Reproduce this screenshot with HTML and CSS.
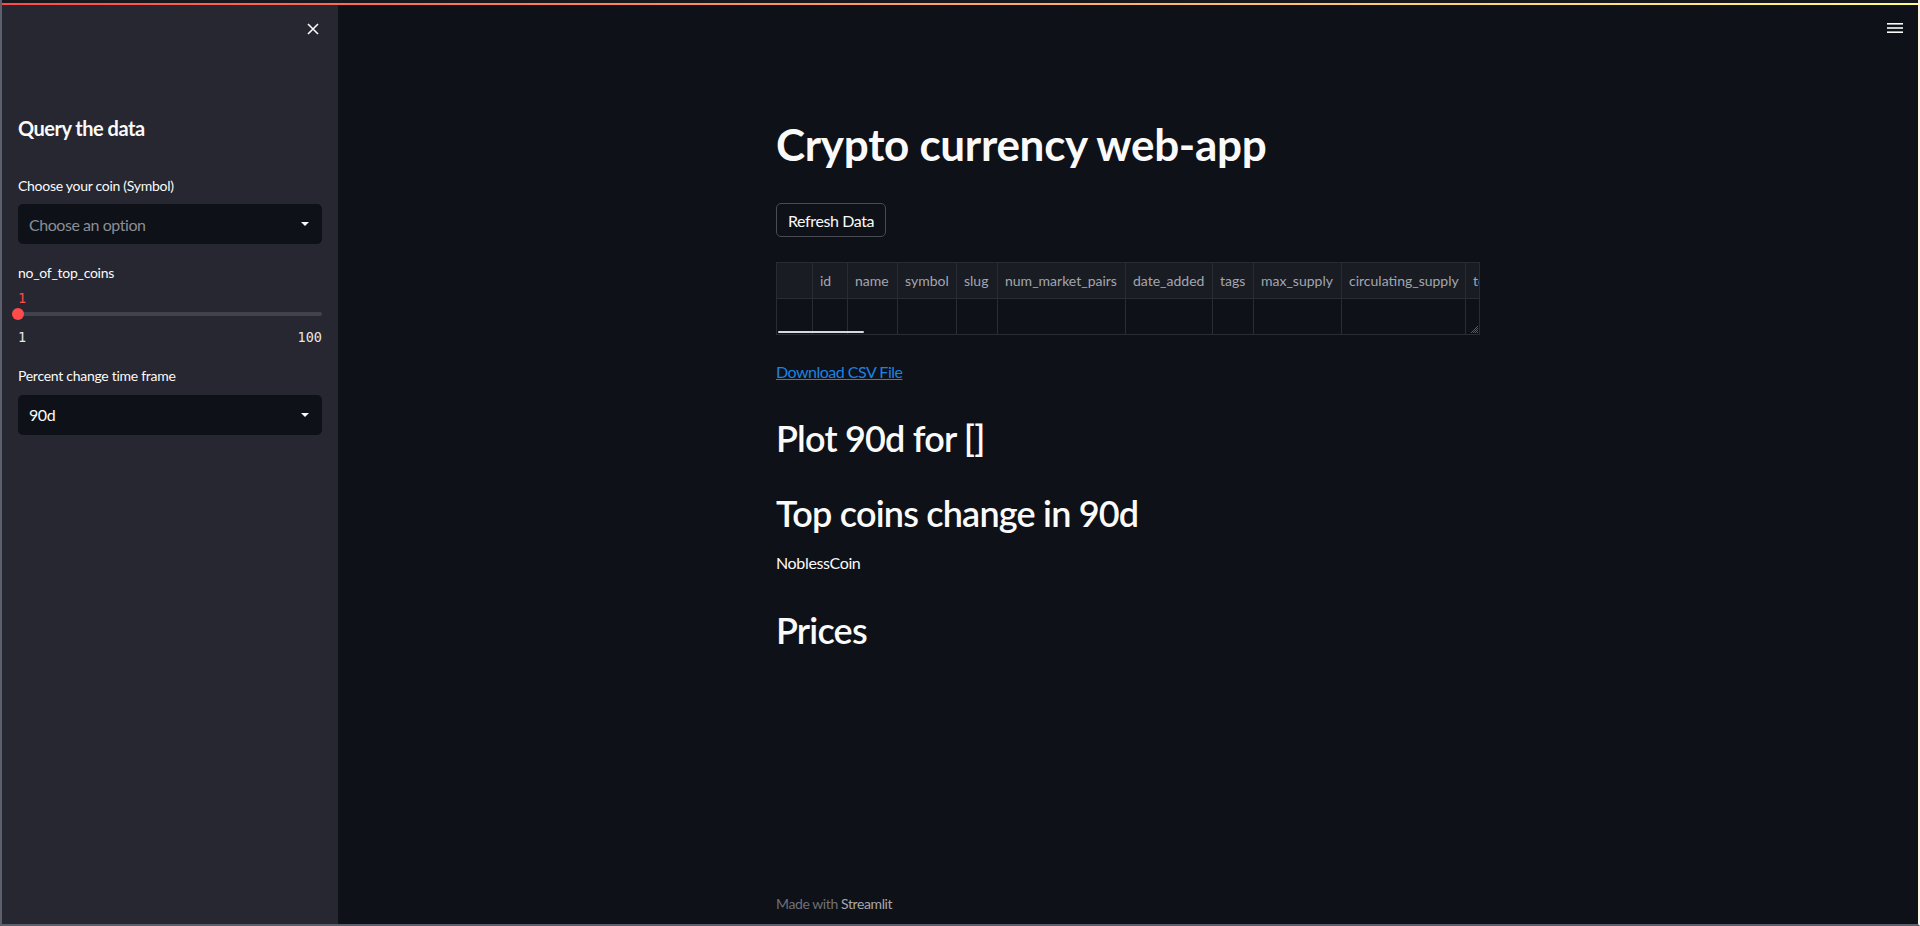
FILE: index.html
```html
<!DOCTYPE html>
<html>
<head>
<meta charset="utf-8">
<link rel="stylesheet" href="styles.css">
</head>
<body>
<div class="frame">
  <div class="topstrip"></div>
  <div class="decoration"></div>
  <div class="app">
    <aside class="sidebar">
      <div class="sb-header">
        <svg class="close" width="14" height="14" viewBox="0 0 14 14"><path d="M2 2 L12 12 M12 2 L2 12" stroke="#fafafa" stroke-width="1.6" fill="none"/></svg>
      </div>
      <h2 class="sb-title">Query the data</h2>
      <label class="sb-label first">Choose your coin (Symbol)</label>
      <div class="select"><span class="placeholder">Choose an option</span><span class="caret"></span></div>
      <label class="sb-label">no_of_top_coins</label>
      <div class="slider">
        <div class="slider-value">1</div>
        <div class="track-wrap"><div class="track"></div><div class="thumb"></div></div>
        <div class="slider-range"><span>1</span><span>100</span></div>
      </div>
      <label class="sb-label third">Percent change time frame</label>
      <div class="select"><span class="value">90d</span><span class="caret"></span></div>
    </aside>
    <main class="main">
      <div class="hamburger">
        <svg width="16" height="12" viewBox="0 0 16 12"><rect x="0" y="1" width="16" height="1.6" fill="#fafafa"/><rect x="0" y="5.2" width="16" height="1.6" fill="#fafafa"/><rect x="0" y="9.4" width="16" height="1.6" fill="#fafafa"/></svg>
      </div>
      <div class="block">
        <h1 class="title">Crypto currency web-app</h1>
        <button class="btn">Refresh Data</button>
        <div class="table">
          <div class="row head">
            <div class="cell" style="width:36px"></div>
            <div class="cell" style="width:35px">id</div>
            <div class="cell" style="width:50px">name</div>
            <div class="cell" style="width:59px">symbol</div>
            <div class="cell" style="width:41px">slug</div>
            <div class="cell" style="width:128px">num_market_pairs</div>
            <div class="cell" style="width:87px">date_added</div>
            <div class="cell" style="width:41px">tags</div>
            <div class="cell" style="width:88px">max_supply</div>
            <div class="cell" style="width:124px">circulating_supply</div>
            <div class="cell last" style="width:60px">total_supply</div>
          </div>
          <div class="row body">
            <div class="cell" style="width:36px"></div>
            <div class="cell" style="width:35px"></div>
            <div class="cell" style="width:50px"></div>
            <div class="cell" style="width:59px"></div>
            <div class="cell" style="width:41px"></div>
            <div class="cell" style="width:128px"></div>
            <div class="cell" style="width:87px"></div>
            <div class="cell" style="width:41px"></div>
            <div class="cell" style="width:88px"></div>
            <div class="cell" style="width:124px"></div>
            <div class="cell last" style="width:60px"></div>
          </div>
          <div class="hscroll"></div>
          <svg class="resize" width="10" height="10" viewBox="0 0 10 10"><path d="M9 2 L2 9 M9 4 L4 9 M9 6 L6 9 M9 8 L8 9" stroke="#6b6e78" stroke-width="0.8"/></svg>
        </div>
        <a class="link" href="#">Download CSV File</a>
        <h2 class="h2 plot">Plot 90d for []</h2>
        <h2 class="h2 top">Top coins change in 90d</h2>
        <p class="text">NoblessCoin</p>
        <h2 class="h2 prices">Prices</h2>
      </div>
      <footer class="footer">Made with <span class="brand">Streamlit</span></footer>
    </main>
  </div>
</div>
</body>
</html>
```
FILE: styles.css
```css
* { box-sizing: border-box; }
html, body { margin: 0; padding: 0; height: 100%; }
body {
  font-family: "Lato", "Noto Sans", sans-serif;
  color: #fafafa;
  background: #0e1117;
  overflow: hidden;
}
.frame {
  height: 926px;
  display: flex;
  flex-direction: column;
  border-left: 2px solid #5c606d;
  border-right: 2px solid #fbf5e4;
  border-bottom: 2px solid #5c606d;
}
.topstrip { height: 3px; background: #17181e; flex: none; }
.decoration {
  height: 2px;
  flex: none;
  background: linear-gradient(90deg, #ff4b4b, #fffd80);
}
.app { flex: 1; display: flex; min-height: 0; }

/* Sidebar */
.sidebar {
  width: 336px;
  flex: none;
  background: #262730;
  padding: 0 16px;
  display: flex;
  flex-direction: column;
}
.sb-header {
  height: 48px;
  display: flex;
  justify-content: flex-end;
  align-items: center;
  padding-right: 2px;
}
.close { display: block; }
.sb-title {
  margin: 59.5px 0 0;
  font-size: 20px;
  line-height: 30px;
  font-weight: 700;
  letter-spacing: -0.5px;
}
.sb-label {
  display: block;
  font-size: 14px;
  line-height: 21px;
  margin-top: 18px;
  letter-spacing: -0.28px;
}
.sb-label.first { margin-top: 32px; }
.sb-label.third { margin-top: 20px; }
.select {
  margin-top: 8.5px;
  height: 40px;
  background: #0e1117;
  border-radius: 5px;
  display: flex;
  align-items: center;
  justify-content: space-between;
  padding: 0 13px 0 11px;
  font-size: 16px;
  letter-spacing: -0.45px;
}
.placeholder { color: #8b8d96; }
.value { color: #fafafa; }
.caret {
  width: 0; height: 0;
  border-left: 4px solid transparent;
  border-right: 4px solid transparent;
  border-top: 4px solid #fafafa;
}
.slider { margin-top: 7px; }
.slider-value {
  font-family: "DejaVu Sans Mono", "Liberation Mono", monospace;
  font-size: 13.5px;
  line-height: 16px;
  color: #ff4b4b;
}
.track-wrap {
  position: relative;
  height: 16px;
  display: flex;
  align-items: center;
}
.track {
  width: 100%;
  height: 4px;
  border-radius: 2px;
  background: #40424d;
}
.thumb {
  position: absolute;
  left: -6px;
  top: 2px;
  width: 12px;
  height: 12px;
  border-radius: 50%;
  background: #ff4b4b;
}
.slider-range {
  margin-top: 7px;
  display: flex;
  justify-content: space-between;
  font-family: "DejaVu Sans Mono", "Liberation Mono", monospace;
  font-size: 13.5px;
  line-height: 16px;
  color: #e6e6e6;
}

/* Main */
.main {
  flex: 1;
  position: relative;
  display: flex;
  flex-direction: column;
  align-items: center;
}
.hamburger {
  position: absolute;
  top: 17px;
  right: 15px;
}
.hamburger svg { display: block; }
.block {
  width: 704px;
  padding-top: 113px;
}
.title {
  margin: 0;
  font-size: 44px;
  line-height: 53px;
  font-weight: 700;
  letter-spacing: -0.3px;
}
.btn {
  margin-top: 32px;
  display: block;
  height: 34px;
  padding: 0 11px;
  background: #0e1117;
  color: #fafafa;
  border: 1px solid #4a4c53;
  border-radius: 5px;
  font-family: inherit;
  font-size: 16px;
  letter-spacing: -0.4px;
}
.table {
  position: relative;
  margin-top: 25px;
  width: 704px;
  border: 1px solid #2a2c34;
  overflow: hidden;
}
.row { display: flex; height: 36px; white-space: nowrap; }
.row.head { background: #1a1c23; border-bottom: 1px solid #2a2c34; height: 36px; }
.row.body { height: 35px; }
.cell {
  flex: none;
  border-right: 1px solid #2a2c34;
  font-size: 14px;
  line-height: 36px;
  padding-left: 7px;
  color: #a2a6b0;
  overflow: hidden;
}
.cell.last { border-right: none; }
.hscroll {
  position: absolute;
  left: 1px;
  bottom: 1px;
  width: 86px;
  height: 2px;
  background: #d8d9dc;
  border-radius: 1px;
}
.resize { position: absolute; right: 0; bottom: 0; display: block; }
.link {
  display: block;
  margin-top: 25px;
  font-size: 16px;
  line-height: 24px;
  color: #1c83e1;
  text-decoration: underline;
  width: max-content;
  letter-spacing: -0.5px;
}
.h2 {
  margin: 0;
  font-size: 36px;
  line-height: 43px;
  font-weight: 600;
  letter-spacing: -0.8px;
}
.h2.plot { margin-top: 33px; }
.h2.top { margin-top: 32px; }
.text {
  margin: 16px 0 0;
  font-size: 16px;
  line-height: 24px;
  letter-spacing: -0.35px;
}
.h2.prices { margin-top: 34px; }
.footer {
  margin-top: auto;
  width: 704px;
  padding-bottom: 10px;
  font-size: 14px;
  line-height: 20px;
  color: #6d7079;
  letter-spacing: -0.4px;
}
.brand { color: #a5a8b0; }
```
